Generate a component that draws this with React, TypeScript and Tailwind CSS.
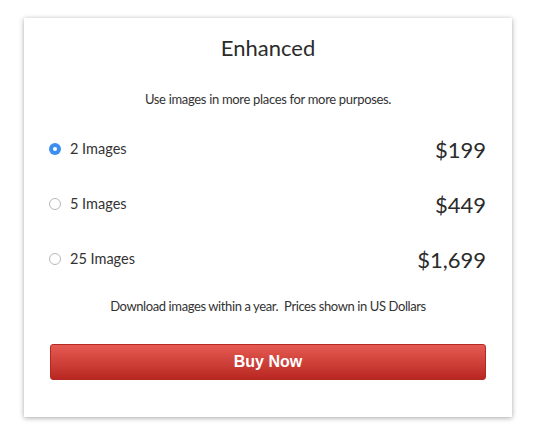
import { useState } from 'react';

const options = [
  { label: '2 Images', price: '$199' },
  { label: '5 Images', price: '$449' },
  { label: '25 Images', price: '$1,699' },
];

export default function App() {
  const [selected, setSelected] = useState(0);

  return (
    <div className="w-[539px] h-[436px] bg-white pt-[18px] pl-[24px] font-['Lato',sans-serif] text-[#333]">
      <div className="w-[488px] h-[399px] bg-white shadow-[0_1px_5px_rgba(0,0,0,0.35)] px-[26px] pt-[16px]">
        <h1 className="text-center text-[22px] leading-[28px] text-[#2b2b2b]">Enhanced</h1>
        <p className="mt-[27px] text-center text-[13px] leading-[20px] tracking-[-0.32px] text-[#333]">
          Use images in more places for more purposes.
        </p>
        <div className="mt-[25px] flex flex-col gap-[25px]">
          {options.map((o, i) => (
            <label
              key={o.label}
              className="flex h-[30px] items-center justify-between cursor-pointer"
              onClick={() => setSelected(i)}
            >
              <span className="flex items-center">
                {selected === i ? (
                  <span className="ml-[-1px] flex h-[12px] w-[12px] items-center justify-center rounded-full bg-[#3d8ef0]">
                    <span className="h-[4px] w-[4px] rounded-full bg-white" />
                  </span>
                ) : (
                  <span className="ml-[-1px] h-[12px] w-[12px] rounded-full border border-[#b8b8b8] bg-white" />
                )}
                <span className="ml-[9px] text-[14.5px] text-[#333]">{o.label}</span>
              </span>
              <span className="text-[22px] text-[#2b2b2b]">{o.price}</span>
            </label>
          ))}
        </div>
        <p className="mt-[22px] text-center text-[13px] leading-[20px] tracking-[-0.4px] text-[#333]">
          Download images within a year.&nbsp; Prices shown in US Dollars
        </p>
        <button className="mt-[28px] h-[36px] w-full rounded-[3px] border border-[#b32a25] bg-gradient-to-b from-[#e55a52] to-[#b92621] font-['Liberation_Sans',sans-serif] text-[16px] font-bold text-white">
          Buy Now
        </button>
      </div>
    </div>
  );
}
